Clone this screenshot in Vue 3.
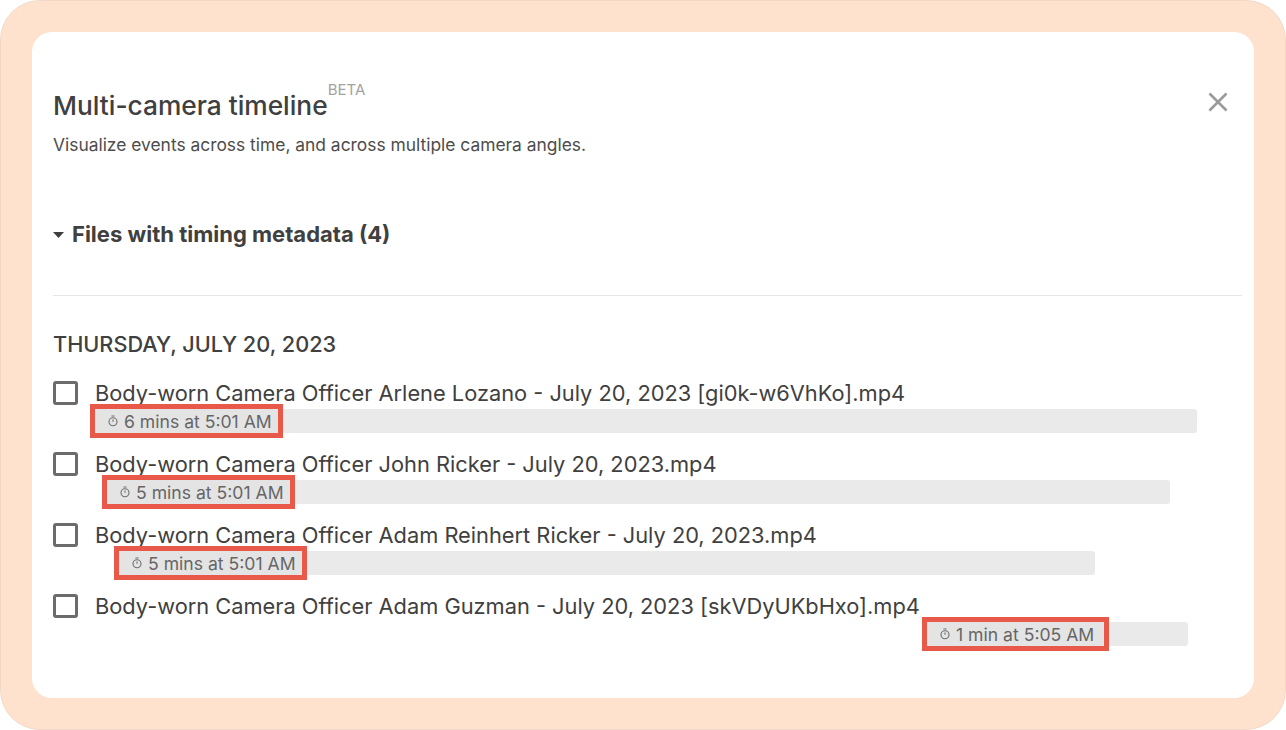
<script setup>
const files = [
  { name: 'Body-worn Camera Officer Arlene Lozano - July 20, 2023 [gi0k-w6VhKo].mp4', offset: 0, width: 1102, chip: 183, label: '6 mins at 5:01 AM' },
  { name: 'Body-worn Camera Officer John Ricker - July 20, 2023.mp4', offset: 12, width: 1063, chip: 183, label: '5 mins at 5:01 AM' },
  { name: 'Body-worn Camera Officer Adam Reinhert Ricker - July 20, 2023.mp4', offset: 24, width: 976, chip: 183, label: '5 mins at 5:01 AM' },
  { name: 'Body-worn Camera Officer Adam Guzman - July 20, 2023 [skVDyUKbHxo].mp4', offset: 832, width: 261, chip: 177, label: '1 min at 5:05 AM' },
]
</script>

<template>
  <div class="frame">
    <main class="card">
      <header class="head">
        <div>
          <h1 class="title">Multi-camera timeline<sup class="beta">BETA</sup></h1>
          <p class="sub">Visualize events across time, and across multiple camera angles.</p>
        </div>
        <svg class="close" width="20" height="20" viewBox="0 0 20 20" fill="none" stroke="#9a9a9a" stroke-width="2.6">
          <path d="M1.5 1.5 18.5 18.5M18.5 1.5 1.5 18.5" />
        </svg>
      </header>

      <div class="section">
        <svg width="11" height="6" viewBox="0 0 11 6" class="caret"><path d="M0 0h11L5.5 6z" fill="#3f3f3f" /></svg>
        <span>Files with timing metadata (4)</span>
      </div>

      <hr class="rule" />

      <h2 class="date">THURSDAY, JULY 20, 2023</h2>

      <ul class="list">
        <li v-for="f in files" :key="f.name" class="row">
          <span class="check"></span>
          <div class="info">
            <div class="name">{{ f.name }}</div>
            <div class="bar" :style="{ marginLeft: f.offset + 'px', width: f.width + 'px' }">
              <span class="chip" :style="{ width: f.chip + 'px' }">
                <svg width="12" height="12" viewBox="0 0 12 12" fill="none" stroke="#6e6e6e" stroke-width="1.1">
                  <circle cx="6" cy="6.8" r="4" />
                  <path d="M4.4 1h3.2M6 4.6v2.2" />
                </svg>
                {{ f.label }}
              </span>
            </div>
          </div>
        </li>
      </ul>
    </main>
  </div>
</template>

<style>
html, body { margin: 0; background: #fff; }
</style>

<style scoped>
.frame {
  box-sizing: border-box;
  width: 1286px;
  height: 730px;
  padding: 31px;
  background: #ffe2cd;
  border: 1px solid #f0d9c8;
  border-radius: 40px;
  font-family: Inter, "Liberation Sans", sans-serif;
  color: #404040;
}
.card {
  box-sizing: border-box;
  height: 666px;
  padding: 59px 12px 0 21px;
  background: #fff;
  border-radius: 20px;
}
.head {
  display: flex;
  justify-content: space-between;
  align-items: flex-start;
  padding-right: 14px;
}
.title {
  margin: 0;
  font-size: 26.3px;
  line-height: 30px;
  font-weight: 500;
  white-space: nowrap;
}
.beta {
  position: relative;
  top: -20px;
  font-size: 15px;
  line-height: 0;
  font-weight: 400;
  color: #a3a3a3;
  vertical-align: baseline;
}
.sub {
  margin: 12px 0 0;
  font-size: 17.4px;
  line-height: 24px;
  color: #4d4d4d;
}
.close { margin-top: 1px; }
.section {
  display: flex;
  align-items: center;
  gap: 8px;
  margin-top: 62px;
  font-size: 22px;
  line-height: 30px;
  font-weight: 700;
}
.caret { margin-top: 2px; }
.rule {
  margin: 46px 0 0;
  border: 0;
  border-top: 1px solid #e6e6e6;
}
.date {
  margin: 32px 0 0;
  font-size: 21.7px;
  line-height: 32px;
  font-weight: 500;
}
.list {
  list-style: none;
  margin: 19px 0 0;
  padding: 0;
}
.row {
  display: flex;
  height: 71px;
}
.check {
  box-sizing: border-box;
  flex: none;
  width: 25px;
  height: 24px;
  margin: 2px 17px 0 0;
  border: 3px solid #6b6b6b;
  border-radius: 3px;
}
.info { flex: 1; min-width: 0; }
.name {
  font-size: 21.8px;
  line-height: 28px;
  white-space: nowrap;
}
.bar {
  display: flex;
  height: 24px;
  margin-top: 2px;
  background: #eaeaea;
  border-radius: 3px;
}
.chip {
  display: inline-flex;
  align-items: center;
  gap: 5px;
  box-sizing: border-box;
  height: 24px;
  padding: 0 0 0 12px;
  background: #e4e4e4;
  outline: 5px solid #e8594a;
  font-size: 17.6px;
  color: #666;
  white-space: nowrap;
}
</style>
